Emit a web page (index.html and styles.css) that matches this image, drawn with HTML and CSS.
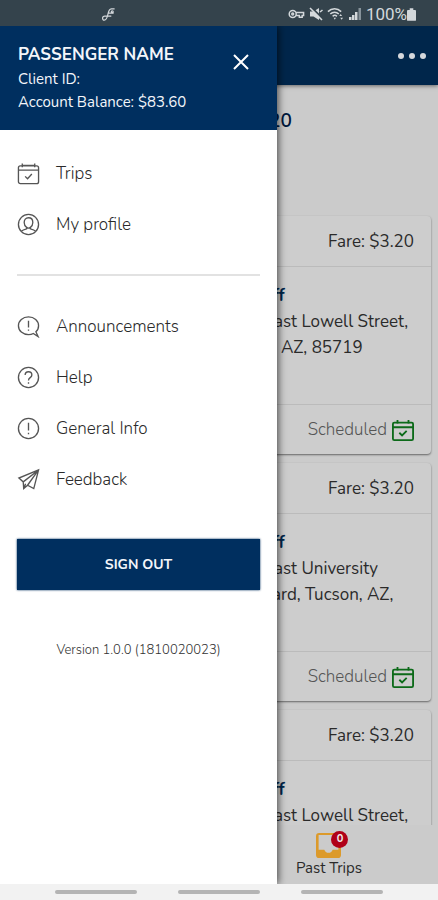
FILE: index.html
```html
<!DOCTYPE html>
<html lang="en">
<head>
<meta charset="utf-8">
<meta name="viewport" content="width=device-width, initial-scale=1">
<title>Trips</title>
<link rel="stylesheet" href="styles.css">
</head>
<body>
<svg class="sprite" aria-hidden="true">
  <symbol id="calendar" viewBox="0 0 24 24">
    <rect x="1.5" y="4" width="21" height="18.5" rx="2"/>
    <path d="M1.5 8.500h21M5.500 1.500v4M18.500 1.500v4M5.500 3.500h13M8.500 15l2.500 2.500 4.500-5"/>
  </symbol>
  <symbol id="calendar-bold" viewBox="0 0 24 24">
    <rect x="1" y="4" width="22" height="19" rx="1.500"/>
    <path d="M1 9h22M6 1v4M18 1v4M8 15l3 3 5-5"/>
  </symbol>
</svg>
<div class="phone">
  <div class="status">
    <svg class="status-logo" viewBox="0 0 16 16"><path d="M14.500 2H11C8.500 2 8 4.500 7.300 8S6 14 3.500 14 1 9.800 4 9.800h7M8 6.500h5.500"/><circle cx="12" cy="5" r="1"/></svg>
    <div class="status-icons">
      <svg class="glyph key" viewBox="0 0 18 14"><circle cx="5" cy="7" r="3.700"/><circle cx="5" cy="7" r="1"/><path d="M8.500 5.500H16.500V8.500H15V10.500H12V8.500H8.500"/></svg>
      <svg class="glyph" viewBox="0 0 14 14"><path class="solid" d="M1 4.500h3.500L10 1v12L4.500 9.500H1z"/><path class="cut" d="M2 0l12 12"/><path d="M1 1l12 12M11 5l2.500-2"/></svg>
      <svg class="glyph wide" viewBox="0 0 18 14"><path d="M1 4.500c4-4 10-4 14 0M3.500 7c2.500-2.500 6.500-2.500 9 0M6 9.500c1.500-1.500 3-1.500 4.500 0"/><path class="solid" d="M7 11h2.500l-1.200 2zM13 9l1.500-2L16 9zM14 11h3l-1.500 2z"/></svg>
      <svg class="glyph" viewBox="0 0 14 14"><path class="solid" d="M1 10h2.500v3H1zM4 8h2.500v5H4zM7 5h2.500v8H7z"/><path class="faint" d="M10.500 1h2.500v12h-2.500z"/></svg>
      <span class="percent">100%</span>
      <svg class="battery" viewBox="0 0 10 14"><path d="M3 0h4v2h2q1 0 1 1v10q0 1-1 1H1q-1 0-1-1V3q0-1 1-1h2z"/></svg>
    </div>
  </div>

  <div class="stage">
    <main class="app">
      <header class="app-bar">
        <button class="more" aria-label="More"><i></i><i></i><i></i></button>
      </header>
      <div class="scroll">
        <h1 class="title">Total Fare: $3.20</h1>
        <article class="card">
          <div class="card-head">Fare: $3.20</div>
          <div class="card-body">
            <div class="stop"><h2>Drop off</h2><p>1200 East Lowell Street, Tucson, AZ, 85719</p></div>
          </div>
          <div class="card-foot">Scheduled <svg><use href="#calendar-bold"/></svg></div>
        </article>
        <article class="card">
          <div class="card-head">Fare: $3.20</div>
          <div class="card-body">
            <div class="stop"><h2>Drop off</h2><p>1200 East University Boulevard, Tucson, AZ,</p></div>
          </div>
          <div class="card-foot">Scheduled <svg><use href="#calendar-bold"/></svg></div>
        </article>
        <article class="card">
          <div class="card-head">Fare: $3.20</div>
          <div class="card-body">
            <div class="stop"><h2>Drop off</h2><p>1200 East Lowell Street,</p></div>
          </div>
        </article>
      </div>
      <footer class="tabs">
        <a class="tab" href="#past">
          <span class="tab-icon">
            <svg viewBox="0 0 24 24"><path fill-rule="evenodd" d="M3 0h18q3 0 3 3v18q0 3-3 3H3q-3 0-3-3V3q0-3 3-3zM2.500 2v14H8q1 3 4 3t4-3h5.500V2z"/></svg>
            <span class="badge">0</span>
          </span>
          Past Trips
        </a>
      </footer>
    </main>

    <aside class="drawer">
      <header class="profile">
        <div>
          <h2>PASSENGER NAME</h2>
          <p>Client ID:</p>
          <p>Account Balance: $83.60</p>
        </div>
        <button class="close" aria-label="Close"><svg viewBox="0 0 16 16"><path d="M1 1l14 14M15 1L1 15"/></svg></button>
      </header>
      <nav class="menu">
        <a href="#trips"><svg><use href="#calendar"/></svg>Trips</a>
        <a href="#profile"><svg viewBox="0 0 24 24"><circle cx="12" cy="12" r="10.500"/><path d="M12 5c-3 0-4.500 2.200-4.500 5 0 2.500 1 4 2.500 5v1.500c-2 .5-4 1-5.500 2.500M12 5c3 0 4.500 2.200 4.500 5 0 2.500-1 4-2.500 5v1.500c2 .5 4 1 5.500 2.500M10 15q2 1.500 4 0"/></svg>My profile</a>
        <hr>
        <a href="#announcements"><svg viewBox="0 0 24 24"><path d="M17 19.300C15.500 20.200 14 20.500 12 20.500 6 20.500 1.500 16.500 1.500 11.200S6 2 12 2s10.500 4 10.500 9.200c0 2.500-1 4.800-2.800 6.300L22 22.500 17 19.300zM12 6v7M12 15v1.500"/></svg>Announcements</a>
        <a href="#help"><svg viewBox="0 0 24 24"><circle cx="12" cy="12" r="10.500"/><path d="M8.500 9.500C8.500 7.500 10 6 12 6s3.500 1.500 3.500 3.300c0 3-3.500 2.700-3.500 5.700M12 17v1.500"/></svg>Help</a>
        <a href="#info"><svg viewBox="0 0 24 24"><circle cx="12" cy="12" r="10.500"/><path d="M12 6v8M12 16.500v1.500"/></svg>General Info</a>
        <a href="#feedback"><svg viewBox="0 0 24 24"><path d="M22.500 2L2 10.500l4.500 4L7 21.500l4-3.500 6.500 3.500zM6.500 14.500L22.500 2 11 18M7 21.500l2-5"/></svg>Feedback</a>
      </nav>
      <button class="signout">SIGN OUT</button>
      <p class="version">Version 1.0.0 (1810020023)</p>
    </aside>
  </div>

  <div class="system-nav"><i></i><i></i><i></i></div>
</div>
</body>
</html>
```
FILE: styles.css
```css
* { box-sizing: border-box; }

body, h1, h2, p { margin: 0; }

body {
  font-family: Nunito, Lato, "Open Sans", sans-serif;
  font-size: 17px;
  font-weight: 300;
  color: #2a2a2a;
}

button {
  padding: 0;
  border: 0;
  background: none;
  font: inherit;
  color: inherit;
}

a { color: inherit; text-decoration: none; }

.sprite { display: none; }

.phone {
  display: flex;
  flex-direction: column;
  height: 100vh;
  overflow: hidden;
}

/* System status bar */
.status {
  display: flex;
  flex: none;
  align-items: center;
  justify-content: space-between;
  height: 26px;
  padding: 2px 22px 0 101px;
  background: #34434c;
  color: #d3d8db;
}

.status-logo {
  width: 15px;
  height: 15px;
  fill: none;
  stroke: #d3d8db;
  stroke-width: 1.3;
}

.status-icons { display: flex; align-items: center; gap: 4px; }

.glyph {
  width: 14px;
  height: 14px;
  fill: none;
  stroke: #d3d8db;
  stroke-width: 1.6;
}

.glyph.key, .glyph.wide { width: 17px; }
.glyph .solid { fill: #d3d8db; stroke: none; }
.glyph .faint { fill: #87939a; stroke: none; }
.glyph .cut { stroke: #34434c; stroke-width: 2; }

.percent { font-family: Roboto, sans-serif; font-size: 17px; font-weight: 400; }

.battery { width: 9px; height: 13px; margin-left: -4px; fill: #d3d8db; }

/* Page behind the drawer */
.stage { position: relative; flex: 1; min-height: 0; overflow: hidden; }

.app {
  display: flex;
  flex-direction: column;
  height: 100%;
  background: #cbcbcb;
}

.app-bar {
  display: flex;
  flex: none;
  align-items: center;
  justify-content: flex-end;
  height: 59px;
  padding: 0 12px;
  background: #00264b;
  box-shadow: 0 1px 4px rgba(0, 0, 0, .5);
}

.more { display: flex; gap: 5px; }
.more i { width: 6px; height: 6px; border-radius: 50%; background: #d5d8dc; }

.scroll {
  flex: 1;
  min-height: 0;
  overflow: hidden;
  padding: 20px 7px 0;
}

.title {
  height: 111px;
  font-size: 19px;
  font-weight: 600;
  line-height: 32px;
  text-align: center;
  color: #00183c;
}

.card {
  margin-bottom: 9px;
  border-radius: 4px;
  background: #cdcdcd;
  box-shadow: 0 1px 2px rgba(0, 0, 0, .5);
}

.card-head, .card-foot {
  display: flex;
  align-items: center;
  justify-content: flex-end;
  gap: 5px;
  height: 51px;
  padding: 0 17px;
}

.card-head { border-bottom: 1px solid #bbb; font-weight: 400; }
.card-foot { height: 50px; border-top: 1px solid #bbb; color: #555; }

.card-foot svg {
  width: 22px;
  height: 22px;
  fill: none;
  stroke: #0c6a19;
  stroke-width: 2;
}

.card-body {
  display: flex;
  justify-content: flex-end;
  height: 137px;
  padding: 16px 8px;
  font-weight: 400;
  line-height: 26px;
}

.stop { flex: 0 0 50%; }
.stop h2 { font-size: 17px; font-weight: 700; line-height: 26px; color: #00264b; }

.tabs {
  display: flex;
  flex: none;
  justify-content: flex-end;
  height: 59px;
  padding: 8px 76px 0;
  background: #cbcbcb;
}

.tab {
  display: flex;
  flex-direction: column;
  align-items: center;
  font-size: 15px;
  font-weight: 400;
  line-height: 18px;
}

.tab-icon { position: relative; height: 26px; }
.tab-icon svg { width: 25px; height: 25px; fill: #dc9a2b; }

.badge {
  position: absolute;
  top: -2px;
  left: 15px;
  width: 17px;
  height: 17px;
  border-radius: 50%;
  background: #b00018;
  color: #eee;
  font-size: 11px;
  font-weight: 700;
  line-height: 16px;
  text-align: center;
}

/* Drawer */
.drawer {
  position: absolute;
  top: 0;
  bottom: 0;
  left: 0;
  width: 277px;
  max-width: 85%;
  background: #fff;
  box-shadow: 1px 0 8px rgba(0, 0, 0, .7);
}

.profile {
  display: flex;
  justify-content: space-between;
  height: 104px;
  padding: 16px 28px 0 18px;
  background: #002f5f;
  color: #f4f6fa;
  font-size: 15px;
  font-weight: 400;
  line-height: 23px;
}

.profile h2 { font-size: 17px; font-weight: 700; line-height: 26px; }

.close { align-self: flex-start; height: 40px; }
.close svg { display: block; width: 16px; height: 16px; stroke: #fff; stroke-width: 2; }

.menu { padding: 18px 17px 0; }

.menu a {
  display: flex;
  align-items: center;
  gap: 16px;
  height: 51px;
}

.menu svg {
  width: 23px;
  height: 23px;
  fill: none;
  stroke: #555;
  stroke-width: 1.4;
}

.menu hr {
  height: 2px;
  margin: 24px 0 25px;
  border: 0;
  background: #e2e2e2;
}

.signout {
  display: block;
  width: calc(100% - 34px);
  height: 51px;
  margin: 34px 17px 0;
  background: #002f5f;
  box-shadow: 0 0 2px #002f5f;
  color: #f4f6fa;
  font-size: 14px;
  font-weight: 700;
}

.version {
  margin-top: 50px;
  font-size: 13px;
  line-height: 20px;
  text-align: center;
  color: #333;
}

/* System navigation bar */
.system-nav {
  display: flex;
  flex: none;
  justify-content: center;
  gap: 41px;
  height: 16px;
  padding: 6px 55px 0;
  background: #f2f2f2;
}

.system-nav i { flex: 1; height: 4px; border-radius: 2px; background: #b4b4b4; }
```
